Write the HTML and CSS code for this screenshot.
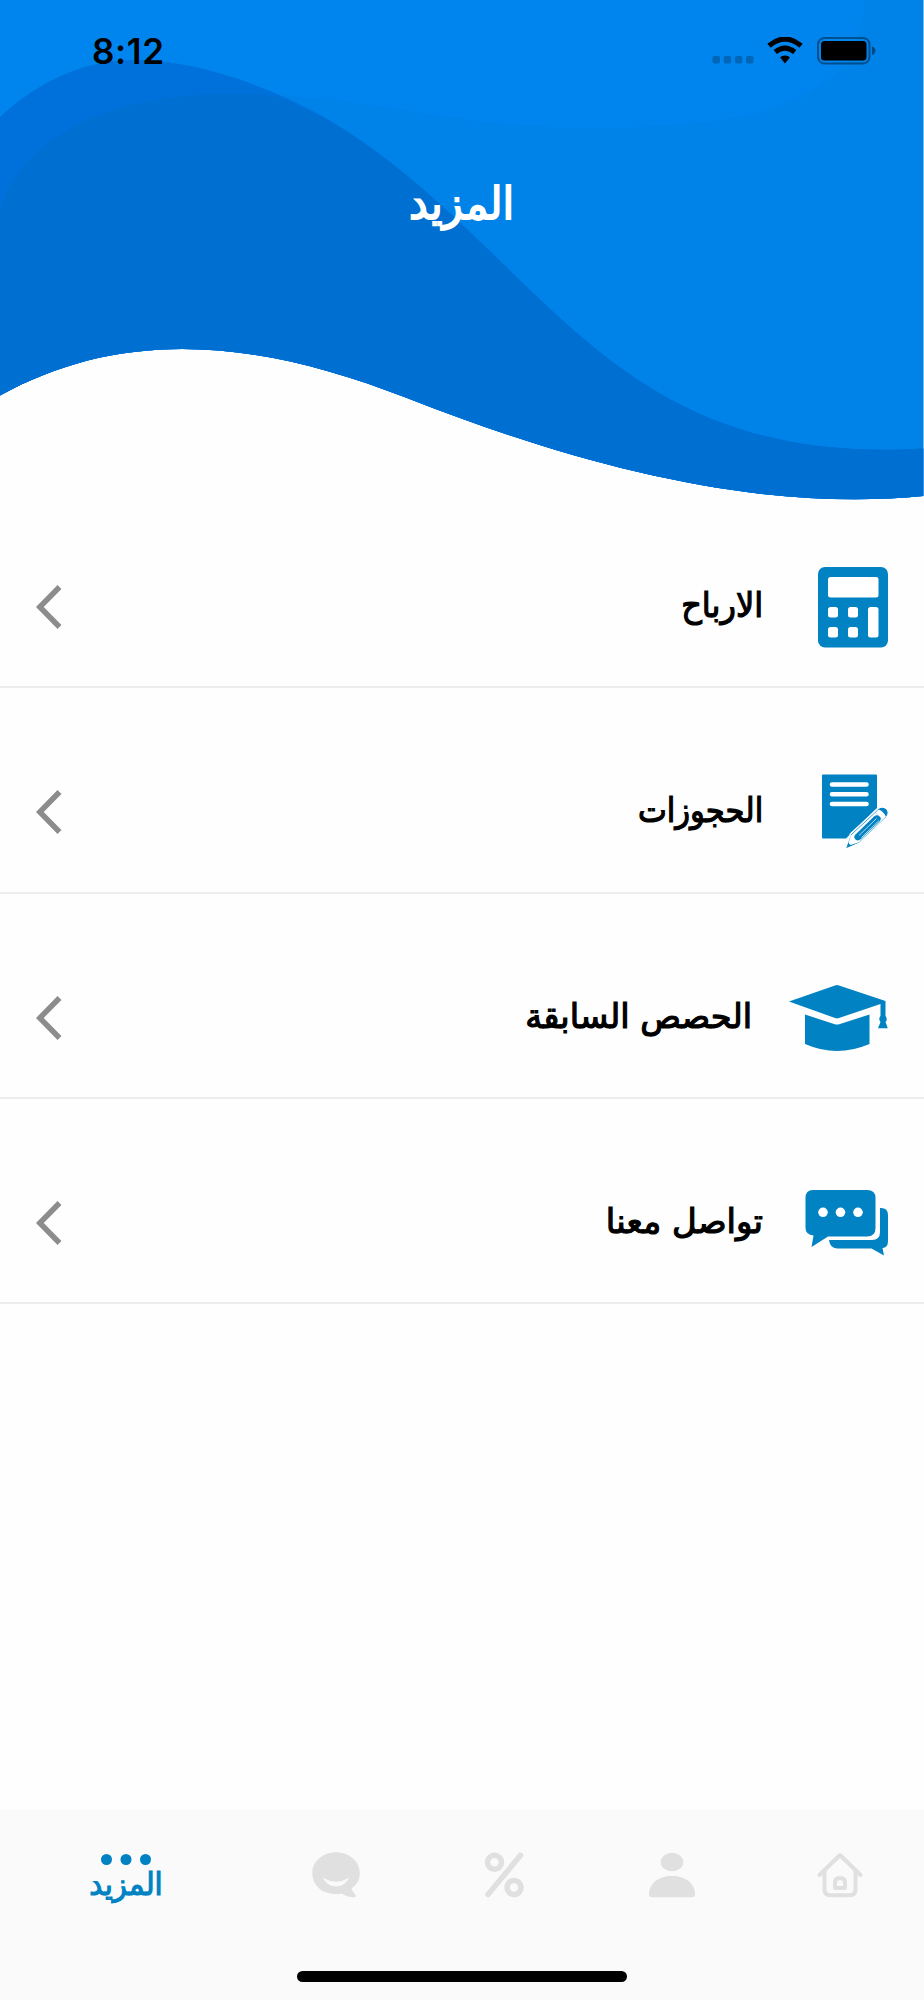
FILE: index.html
```html
<!DOCTYPE html>
<html lang="ar" dir="rtl">
<head>
    <meta charset="UTF-8">
    <meta name="viewport" content="width=device-width, initial-scale=1.0">
    <title>المزيد</title>
    <link rel="stylesheet" href="styles.css">
</head>
<body>
    <div class="screen">
        <header class="header">
            <svg class="wave" viewBox="0 0 924 502" aria-hidden="true">
                <path fill="#0084ed" d="M0 0H923.3V496C760 512 585 468 407 398C245 334 115 332 0 395.5Z"/>
                <path fill="#0083e8" d="M0 209C28 132 110 94 236 94C370 94 445 128 590 128C750 128 864 105 864 0H923.3V496C760 512 585 468 407 398C245 334 115 332 0 395.5Z"/>
                <path fill="#0070db" d="M0 117C40 80 85 60 136 60C200 60 285 91 345 130C545 260 610 468 923.3 448.5V496C760 512 585 468 407 398C245 334 115 332 0 395.5Z"/>
                <path fill="#006fd2" d="M0 209C28 132 110 94 236 94L271 95Q310 108 345 130C545 260 610 468 923.3 448.5V496C760 512 585 468 407 398C245 334 115 332 0 395.5Z"/>
            </svg>
            <div class="status-bar" dir="ltr">
                <span class="time">8:12</span>
                <div class="status-icons">
                    <svg class="signal" width="42" height="28" viewBox="0 0 42 28">
                        <g fill="#000" opacity=".22">
                            <rect x="0.5" y="19" width="7.5" height="7.5" rx="2"/>
                            <rect x="11.7" y="19" width="7.5" height="7.5" rx="2"/>
                            <rect x="22.9" y="19" width="7.5" height="7.5" rx="2"/>
                            <rect x="34" y="19" width="7.5" height="7.5" rx="2"/>
                        </g>
                    </svg>
                    <svg class="wifi" width="36" height="28" viewBox="0 0 36 28">
                        <path d="M2 8.7Q18 -4.5 34 8.7M8.3 15Q18 7.2 27.700 15" fill="none" stroke="#000" stroke-width="5.2"/>
                        <path d="M13 20.3Q18 16.500 23 20.3L18 26.5Z"/>
                    </svg>
                    <svg class="battery" width="60" height="28" viewBox="0 0 60 28">
                        <rect x="1" y="1" width="51.5" height="25.5" rx="6.5" fill="none" stroke="#000" stroke-opacity=".4" stroke-width="2"/>
                        <rect x="4" y="4" width="45.5" height="19.5" rx="3.5"/>
                        <path d="M55 9.5Q58.5 11 58.5 13.800T55 18.2Z" opacity=".45"/>
                    </svg>
                </div>
            </div>
            <h1 class="title"><span class="label">المزيد</span></h1>
        </header>

        <main class="menu">
            <a class="menu-item earnings">
                <span class="menu-icon">
                    <svg width="70" height="81" viewBox="0 0 70 81">
                        <rect width="70" height="80.5" rx="7"/>
                        <g fill="#fff">
                            <rect x="10" y="10" width="50.5" height="20.5" rx="2.5"/>
                            <rect x="10" y="40" width="10" height="10.5" rx="2.5"/>
                            <rect x="30" y="40" width="10" height="10.5" rx="2.5"/>
                            <rect x="50" y="40" width="10.5" height="30.5" rx="2.5"/>
                            <rect x="10" y="60" width="10" height="10.5" rx="2.5"/>
                            <rect x="30" y="60" width="10" height="10.5" rx="2.5"/>
                        </g>
                    </svg>
                </span>
                <span class="label">الارباح</span>
                <svg class="chevron" width="26" height="44" viewBox="0 0 26 44"><path d="M23.5 2L3.8 22L23.5 42"/></svg>
            </a>
            <a class="menu-item bookings">
                <span class="menu-icon">
                    <svg width="66" height="76" viewBox="0 0 66 76">
                        <path d="M1 0.5H54Q55 0.5 55 1.5V34L24 64.5H1Q0 64.5 0 63.5V1.5Q0 0.5 1 0.5Z"/>
                        <path d="M10 10.500H44.500M10 20.300H44.500M10 30H44.500" stroke="#fff" stroke-width="4.600" stroke-linecap="round"/>
                        <path d="M23 75.500L28.500 60L56 34.500Q61 31 65 35Q68 39 64.500 43.500L37 69.500Z" stroke="#fff" stroke-width="1.500"/>
                        <path d="M28.800 61.500L53.500 38.500L61 45.500L36.500 68.500L28.500 71L26.500 69Z" fill="#fff"/>
                        <path d="M33.500 60.500L52 42.500Q55 40 57.800 42.500Q60 45 57.500 47.500L39 65Q36 67.500 33.500 65.500Q31 63 33.500 60.500Z"/>
                        <path d="M37 61.500L54.500 44.500M39.500 63.500L57 46.500" stroke="#fff" stroke-width="0.700"/>
                        <path d="M53.500 38.500L56.500 35.500Q61 37 64 42.500L61 45.500Z" fill="#fff"/>
                    </svg>
                </span>
                <span class="label">الحجوزات</span>
                <svg class="chevron" width="26" height="44" viewBox="0 0 26 44"><path d="M23.5 2L3.8 22L23.5 42"/></svg>
            </a>
            <a class="menu-item lessons">
                <span class="menu-icon">
                    <svg width="99" height="66" viewBox="0 0 99 66">
                        <path d="M0 16.5L46 0.5Q48 -0.3 50 0.5L96.5 16V31Q99 34.5 96.5 37L98.8 43.3H89L91.5 37Q89 34 91.5 31V19L50 33Q48 33.7 46 33Z"/>
                        <path d="M16 29.5L45 39Q48 40 51 39L80.5 29.5V59Q64 66 48 66T16 59Z"/>
                    </svg>
                </span>
                <span class="label">الحصص السابقة</span>
                <svg class="chevron" width="26" height="44" viewBox="0 0 26 44"><path d="M23.5 2L3.8 22L23.5 42"/></svg>
            </a>
            <a class="menu-item contact">
                <span class="menu-icon">
                    <svg width="83" height="66" viewBox="0 0 83 66">
                        <path d="M8 0H62Q70.5 0 70.5 8V38Q70.5 46.5 62 46.5H23L6.5 57L8.5 45.5Q0.5 44.5 0.5 38V8Q0.5 0 8 0Z"/>
                        <path d="M75 18Q83 17.5 83 25V51Q83 58 77.5 58L79 65.5L66.5 58.5H32Q25 58 24 50H67Q75 50 75 42Z"/>
                        <g fill="#fff"><circle cx="18" cy="22.3" r="4.8"/><circle cx="35.5" cy="22.3" r="4.8"/><circle cx="53" cy="22.3" r="4.8"/></g>
                    </svg>
                </span>
                <span class="label">تواصل معنا</span>
                <svg class="chevron" width="26" height="44" viewBox="0 0 26 44"><path d="M23.5 2L3.8 22L23.5 42"/></svg>
            </a>
        </main>

        <footer class="footer">
            <nav class="tabs">
                <a class="tab">
                    <svg width="46" height="46" viewBox="0 0 46 46" fill="none" stroke="#e0e0e0" stroke-width="4" stroke-linecap="round" stroke-linejoin="round">
                        <path d="M2.500 23L23 3L43.500 23"/>
                        <path d="M7.500 19V37.500Q7.500 43.200 13.500 43.200H32.500Q38.500 43.200 38.500 37.500V19"/>
                        <path d="M18 36V31Q18 26 23 26T28 31V36Z"/>
                    </svg>
                </a>
                <a class="tab">
                    <svg width="46" height="46" viewBox="0 0 46 46" fill="#e0e0e0">
                        <ellipse cx="23" cy="10" rx="11.3" ry="9.3"/>
                        <path d="M0 42C0 32 9 24 23 24S46 32 46 42Q46 45.2 43 45.2H3Q0 45.2 0 42Z"/>
                    </svg>
                </a>
                <a class="tab">
                    <svg width="40" height="46" viewBox="0 0 40 46" fill="none" stroke="#e0e0e0" stroke-width="5.5" stroke-linecap="round">
                        <circle cx="10.5" cy="10.3" r="7"/>
                        <circle cx="30" cy="35.5" r="7"/>
                        <path d="M36.500 3.300L4 42.500"/>
                    </svg>
                </a>
                <a class="tab">
                    <svg width="48" height="46" viewBox="0 0 48 46" fill="#e0e0e0">
                        <path d="M24 0.3C37 0.3 47.8 9.5 47.8 21Q47.8 31 39.5 36.5Q41 41 43.5 43Q44.3 45.2 42 45.2Q35 45 29.5 41.5C12 44.5 0.3 34 0.3 21C0.3 9.5 11 0.3 24 0.3Z"/>
                        <path d="M11.5 26.5Q24 34 36.500 26.5Q32 34 24 34T11.5 26.5Z" fill="#fafafa" stroke="#fafafa" stroke-width="1" stroke-linejoin="round"/>
                    </svg>
                </a>
                <a class="tab active">
                    <svg width="50" height="11" viewBox="0 0 50 11">
                        <circle cx="5.5" cy="5.5" r="5.5"/><circle cx="25" cy="5.5" r="5.5"/><circle cx="44.5" cy="5.5" r="5.5"/>
                    </svg>
                    <span class="label">المزيد</span>
                </a>
            </nav>
            <div class="home-indicator"></div>
        </footer>
    </div>
</body>
</html>
```
FILE: styles.css
```css
* {
    box-sizing: border-box;
}

body {
    margin: 0;
    background: #fefefe;
    font-family: "DejaVu Sans", sans-serif;
    color: #000;
}

.screen {
    display: flex;
    flex-direction: column;
    height: 2000px;
    overflow: hidden;
}

.label {
    display: inline-block;
    white-space: nowrap;
}

/* header */
.header {
    position: relative;
    height: 483px;
    flex-shrink: 0;
}

.wave {
    position: absolute;
    top: 0;
    left: 0;
    width: 924px;
    height: 502px;
}

.status-bar {
    position: relative;
    display: flex;
    justify-content: space-between;
    padding: 37px 47px 0 92px;
}

.time {
    font: 600 35px/28px Inter, sans-serif;
    letter-spacing: 0.6px;
}

.status-icons {
    display: flex;
}

.wifi {
    margin: 0 14px 0 13px;
}

.title {
    position: relative;
    margin: 109px 0 0;
    text-align: center;
    font-size: 45px;
    line-height: 60px;
    font-weight: 400;
    color: #fff;
    -webkit-text-stroke: 1.8px #fff;
}

.title .label {
    transform: scaleX(0.93);
}

/* menu */
.menu-item {
    display: flex;
    align-items: center;
    height: 205.3px;
    padding: 45px 36px 0;
    border-bottom: 2px solid #ededed;
    font-size: 34px;
    line-height: 50px;
    -webkit-text-stroke: 1.2px #000;
}

.menu-item .label {
    margin-top: -4px;
    transform-origin: right;
}

.earnings .label {
    transform: scaleX(0.94);
}

.bookings .label {
    transform: scaleX(0.9);
}

.lessons .label {
    transform: scaleX(0.99);
}

.menu-icon {
    display: flex;
    min-width: 88px;
    margin-left: 37px;
    fill: #0082c3;
}

.chevron {
    margin-right: auto;
    fill: none;
    stroke: #8c8c8c;
    stroke-width: 5.5;
}

/* bottom bar */
.footer {
    display: flex;
    flex-direction: column;
    justify-content: space-between;
    align-items: center;
    height: 190px;
    margin-top: auto;
    padding: 42px 0 18px;
    background: #fafafa;
    box-shadow: 0 0 2px #fafafa;
}

.tabs {
    display: flex;
    width: 100%;
}

.tab {
    display: flex;
    flex: 1;
    flex-direction: column;
    align-items: center;
}

.tab.active {
    flex: 1.5;
    padding-top: 2px;
    fill: #0082c3;
    color: #0082c3;
    font-size: 31px;
    line-height: 38px;
    -webkit-text-stroke: 1.2px #0082c3;
}

.tab.active .label {
    transform: scaleX(0.94);
}

.home-indicator {
    width: 330px;
    height: 11px;
    border-radius: 6px;
    background: #000;
}
```
